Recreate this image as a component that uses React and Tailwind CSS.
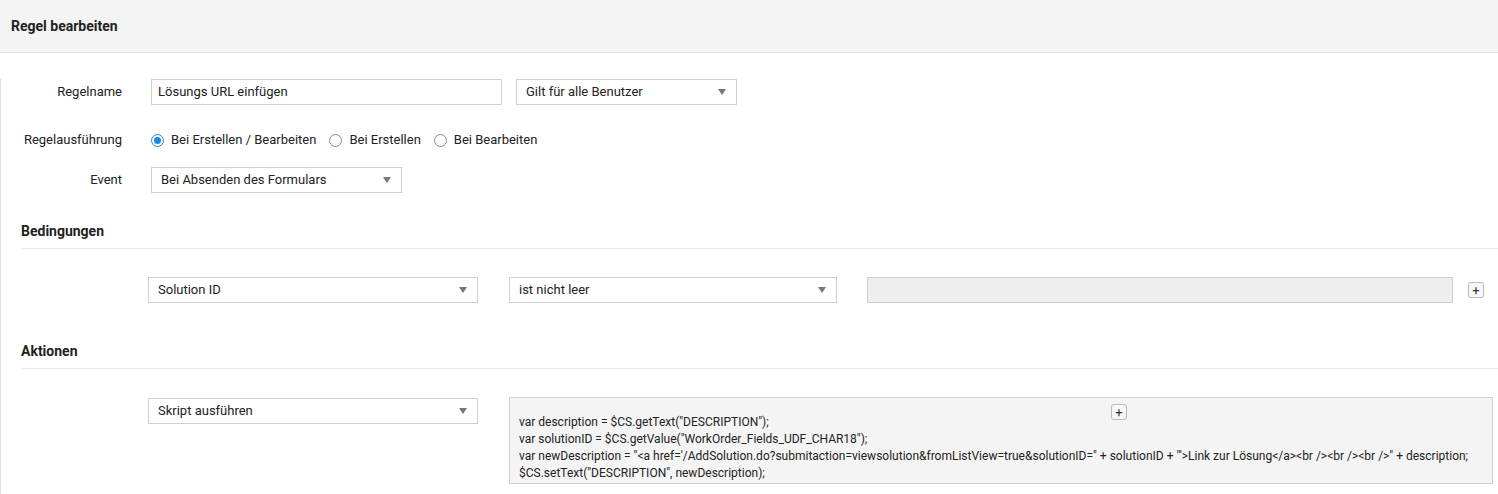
const Caret = () => (
  <span className="ml-auto w-0 h-0 border-l-[4px] border-r-[4px] border-t-[6px] border-l-transparent border-r-transparent border-t-[#777]" />
);

function Select({ text, className }) {
  return (
    <div className={`h-[26px] border border-[#cfcfcf] bg-white flex items-center px-[9px] pr-[10px] ${className}`}>
      <span>{text}</span>
      <Caret />
    </div>
  );
}

function Radio({ checked, label }) {
  return (
    <label className="flex items-center gap-[7px] mr-[13px]">
      <span className={`w-[13px] h-[13px] rounded-full border flex items-center justify-center ${checked ? 'border-[#1e88e5]' : 'border-[#8a8a8a]'}`}>
        {checked && <span className="w-[7px] h-[7px] rounded-full bg-[#1e88e5]" />}
      </span>
      {label}
    </label>
  );
}

const Plus = () => (
  <span className="w-[16px] h-[16px] border border-[#bbb] rounded-[3px] bg-[#f7f7f7] flex items-center justify-center text-[13px] leading-none text-[#333]">+</span>
);

export default function App() {
  return (
    <div className="w-[1498px] h-[494px] bg-white text-[13px] text-[#222] overflow-hidden" style={{ fontFamily: 'Roboto, "Liberation Sans", sans-serif' }}>
      <div className="h-[53px] bg-[#f4f4f4] border-b border-[#e6e6e6] flex items-center px-[11px] font-bold text-[14px]">Regel bearbeiten</div>
      <div className="border-l border-[#e0e0e0] h-[441px]">
        <div className="flex items-center mt-[26px] h-[26px]">
          <div className="w-[121px] text-right">Regelname</div>
          <div className="ml-[29px] w-[351px] h-[26px] border border-[#cfcfcf] flex items-center px-[6px]">Lösungs URL einfügen</div>
          <Select text="Gilt für alle Benutzer" className="ml-[14px] w-[221px]" />
        </div>
        <div className="flex items-center mt-[22px] h-[26px]">
          <div className="w-[121px] text-right">Regelausführung</div>
          <div className="ml-[29px] flex items-center">
            <Radio checked label="Bei Erstellen / Bearbeiten" />
            <Radio label="Bei Erstellen" />
            <Radio label="Bei Bearbeiten" />
          </div>
        </div>
        <div className="flex items-center mt-[14px] h-[26px]">
          <div className="w-[121px] text-right">Event</div>
          <Select text="Bei Absenden des Formulars" className="ml-[29px] w-[251px]" />
        </div>
        <div className="ml-[20px] mt-[28px] pb-[6px] border-b border-[#ebebeb] font-bold text-[14px]">Bedingungen</div>
        <div className="flex items-center mt-[28px] ml-[147px]">
          <Select text="Solution ID" className="w-[330px]" />
          <Select text="ist nicht leer" className="ml-[31px] w-[328px]" />
          <div className="ml-[30px] w-[586px] h-[26px] border border-[#d0d0d0] bg-[#eeeeee]" />
          <div className="ml-[15px]"><Plus /></div>
        </div>
        <div className="ml-[20px] mt-[38px] pb-[6px] border-b border-[#ebebeb] font-bold text-[14px]">Aktionen</div>
        <div className="flex items-start mt-[28px] ml-[147px]">
          <Select text="Skript ausführen" className="w-[330px] mt-[1px]" />
          <div className="ml-[31px] w-[984px] h-[87px] border border-[#cfcfcf] bg-[#f4f4f4] px-[9px] pt-[6px] text-[12px] leading-[17px]">
            <div className="flex justify-start pl-[592px] h-[16px] mb-[-6px]"><Plus /></div>
            <div>var description = $CS.getText("DESCRIPTION");</div>
            <div>var solutionID = $CS.getValue("WorkOrder_Fields_UDF_CHAR18");</div>
            <div>{'var newDescription = "<a href=\'/AddSolution.do?submitaction=viewsolution&fromListView=true&solutionID=" + solutionID + "\'>Link zur Lösung</a><br /><br /><br />" + description;'}</div>
            <div>$CS.setText("DESCRIPTION", newDescription);</div>
          </div>
        </div>
      </div>
    </div>
  );
}
